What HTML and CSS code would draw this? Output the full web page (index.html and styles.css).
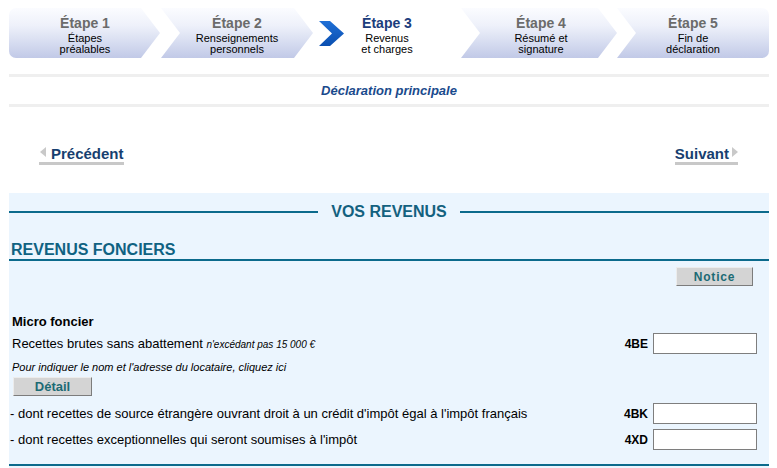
FILE: index.html
```html
<!DOCTYPE html>
<html lang="fr">
<head>
<meta charset="utf-8">
<title>Déclaration principale</title>
<link rel="stylesheet" href="styles.css">
</head>
<body>
<div class="page">
  <div class="steps">
    <div class="step step-first">
      <div class="step-title">Étape 1</div>
      <div class="step-sub">Étapes<br>préalables</div>
    </div>
    <div class="step step-mid step-w152">
      <div class="step-title">Étape 2</div>
      <div class="step-sub">Renseignements<br>personnels</div>
    </div>
    <div class="step step-current">
      <svg class="chevron" width="25" height="25" viewBox="0 0 25 25">
        <defs>
          <linearGradient id="cg" x1="0" y1="0" x2="0" y2="1">
            <stop offset="0" stop-color="#1f6fd6"/>
            <stop offset="1" stop-color="#0a4fb0"/>
          </linearGradient>
        </defs>
        <polygon points="0,0 11,0 25,12.5 11,25 0,25 13,12.5" fill="url(#cg)"/>
      </svg>
      <div class="current-text">
        <div class="step-title">Étape 3</div>
        <div class="step-sub">Revenus<br>et charges</div>
      </div>
    </div>
    <div class="step step-mid step-w156">
      <div class="step-title">Étape 4</div>
      <div class="step-sub">Résumé et<br>signature</div>
    </div>
    <div class="step step-last">
      <div class="step-title">Étape 5</div>
      <div class="step-sub">Fin de<br>déclaration</div>
    </div>
  </div>

  <div class="decl">Déclaration principale</div>

  <div class="nav">
    <a class="nav-link nav-prev" href="#"><span class="tri tri-left"></span>Précédent</a>
    <a class="nav-link nav-next" href="#">Suivant<span class="tri tri-right"></span></a>
  </div>

  <div class="panel">
    <div class="section-title"><span>VOS REVENUS</span></div>
    <h2 class="sub-title">REVENUS FONCIERS</h2>
    <div class="notice-row"><button class="btn btn-notice">Notice</button></div>

    <div class="micro">Micro foncier</div>
    <div class="field-row row-4be">
      <div class="label">Recettes brutes sans abattement <em class="hint">n'excédant pas 15 000 €</em></div>
      <div class="code">4BE</div>
      <input class="box" type="text">
    </div>
    <div class="info">Pour indiquer le nom et l'adresse du locataire, cliquez ici</div>
    <button class="btn btn-detail">Détail</button>

    <div class="field-row row-4bk">
      <div class="label">- dont recettes de source étrangère ouvrant droit à un crédit d'impôt égal à l'impôt français</div>
      <div class="code">4BK</div>
      <input class="box" type="text">
    </div>
    <div class="field-row row-4xd">
      <div class="label">- dont recettes exceptionnelles qui seront soumises à l'impôt</div>
      <div class="code">4XD</div>
      <input class="box" type="text">
    </div>
    <div class="bottom-rule"></div>
  </div>
</div>
</body>
</html>
```

FILE: styles.css
```css
html, body {
  margin: 0;
  padding: 0;
  background: #ffffff;
  font-family: "Liberation Sans", Arial, sans-serif;
  color: #000;
}

.page {
  margin-left: 9px;
  width: 760px;
  padding-top: 8px;
}

/* ---------- steps ---------- */
.steps {
  display: flex;
  height: 50px;
}

.step {
  height: 50px;
  box-sizing: border-box;
  display: flex;
  flex-direction: column;
  align-items: center;
  padding-top: 7px;
  text-align: center;
  background: linear-gradient(#fbfcff 0%, #eef1fa 35%, #d6dcf0 70%, #c1c9e7 100%);
}

.step-first {
  width: 152px;
  border-radius: 7px 0 0 7px;
  clip-path: polygon(0 0, calc(100% - 20px) 0, calc(100% - 1px) 50%, calc(100% - 20px) 100%, 0 100%);
}

.step-mid {
  padding-left: 4px;
  padding-right: 4px;
  clip-path: polygon(0 0, calc(100% - 19px) 0, 100% 50%, calc(100% - 19px) 100%, 0 100%, 19px 50%);
}
.step-w152 { width: 152px; }
.step-w156 { width: 156px; padding-left: 8px; }

.step-last {
  width: 152px;
  border-radius: 0 7px 7px 0;
  clip-path: polygon(0 0, 100% 0, 100% 100%, 0 100%, 19px 50%);
}

.step-current {
  width: 148px;
  background: none;
  display: grid;
  grid-template-columns: 1fr auto 1fr;
  align-items: start;
}
.chevron {
  justify-self: start;
  margin-left: 6px;
  margin-top: 6px;
}
.current-text {
  display: flex;
  flex-direction: column;
  align-items: center;
}

.step-title {
  font-size: 14px;
  font-weight: bold;
  line-height: 17px;
  color: #6b6b6b;
  white-space: nowrap;
}
.step-current .step-title {
  color: #1b3d7c;
}
.step-sub {
  font-size: 11px;
  line-height: 11px;
  color: #000;
  margin-top: 1px;
  white-space: nowrap;
}

/* ---------- declaration bar ---------- */
.decl {
  margin-top: 16px;
  border-top: 3px solid #efefef;
  border-bottom: 3px solid #efefef;
  height: 27px;
  line-height: 27px;
  text-align: center;
  font-size: 13px;
  font-weight: bold;
  font-style: italic;
  color: #1a4a8c;
}

/* ---------- nav ---------- */
.nav {
  height: 86px;
  box-sizing: border-box;
  padding: 38px 31px 0 30px;
  display: flex;
  justify-content: space-between;
  align-items: flex-start;
}
.nav-link {
  display: inline-flex;
  align-items: center;
  font-size: 15px;
  font-weight: bold;
  line-height: 17px;
  color: #173f70;
  text-decoration: none;
  border-bottom: 3px solid #c8c8c8;
}
.tri {
  display: inline-block;
  width: 0;
  height: 0;
  border-top: 5px solid transparent;
  border-bottom: 5px solid transparent;
  margin-top: -3px;
}
.tri-left {
  border-right: 6px solid #c9c9c9;
  margin-left: 1px;
  margin-right: 5px;
}
.tri-right {
  border-left: 6px solid #c9c9c9;
  margin-left: 3px;
}

/* ---------- panel ---------- */
.panel {
  background: #ebf5fe;
  padding: 0 12px 3px 0;
}

.section-title {
  display: flex;
  align-items: center;
  height: 20px;
  padding-top: 9px;
  margin-right: -12px;
}
.section-title::before,
.section-title::after {
  content: "";
  flex: 1;
  height: 2px;
  background: #0b6a8c;
}
.section-title span {
  padding: 0 13px;
  font-size: 16px;
  font-weight: bold;
  color: #13617f;
  line-height: 20px;
}

.sub-title {
  margin: 19px -12px 0 0;
  padding-left: 2px;
  font-size: 16px;
  font-weight: bold;
  line-height: 18px;
  color: #0f6282;
  border-bottom: 2px solid #0b6a8c;
}

.notice-row {
  display: flex;
  justify-content: flex-end;
  margin-top: 6px;
  padding-right: 4px;
}

.btn {
  font-family: "Liberation Sans", Arial, sans-serif;
  font-weight: bold;
  color: #1c6b74;
  background: #d4d4d4;
  border: 1px solid;
  border-color: #ececec #7c7c7c #7c7c7c #ececec;
  padding: 0;
  box-sizing: border-box;
  cursor: pointer;
}
.btn-notice {
  width: 77px;
  height: 19px;
  font-size: 12px;
  letter-spacing: 0.8px;
}
.btn-detail {
  display: block;
  margin: 3px 0 0 4px;
  width: 79px;
  height: 19px;
  font-size: 13px;
}

.micro {
  margin-top: 28px;
  padding-left: 3px;
  font-size: 13px;
  font-weight: bold;
  line-height: 15px;
}

.field-row {
  display: flex;
  align-items: center;
  padding-left: 3px;
}
.field-row .label {
  flex: 1;
  font-size: 13px;
  white-space: nowrap;
}
.row-4be { margin-top: 4px; }
.row-4bk { margin-top: 7px; padding-left: 1px; }
.row-4xd { margin-top: 5px; padding-left: 1px; }

.hint {
  font-size: 10px;
  font-style: italic;
}
.code {
  font-size: 12px;
  font-weight: bold;
  margin-right: 5px;
}
.box {
  width: 104px;
  height: 21px;
  box-sizing: border-box;
  border: 1px solid #7e7e7e;
  background: #fff;
  margin: 0;
  padding: 0 2px;
}

.info {
  margin-top: 6px;
  padding-left: 3px;
  font-size: 11px;
  font-style: italic;
  line-height: 14px;
}

.bottom-rule {
  margin-top: 14px;
  margin-right: -12px;
  height: 2px;
  background: #0b6a8c;
}
```
